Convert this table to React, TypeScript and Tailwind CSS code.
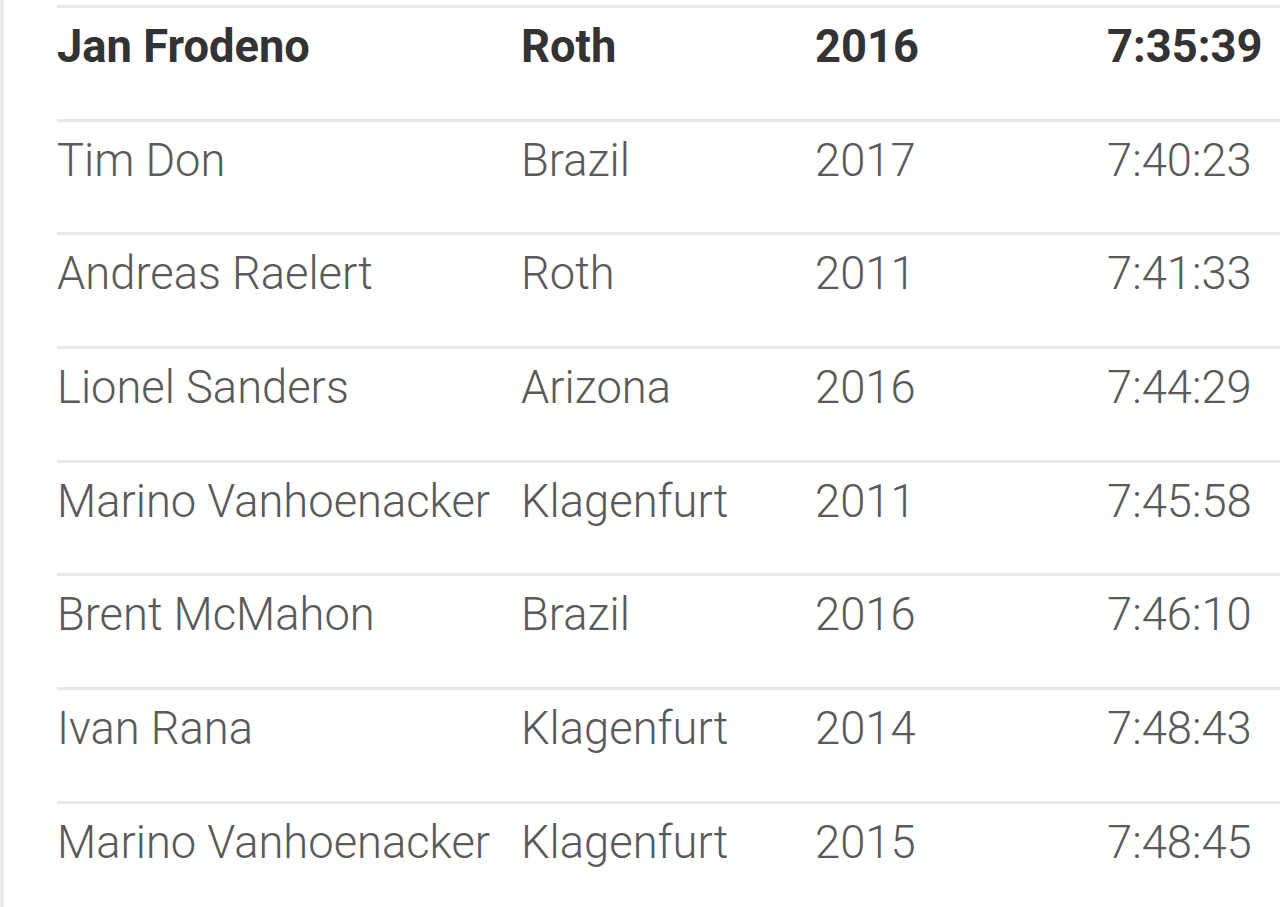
const rows = [
  { name: 'Jan Frodeno', place: 'Roth', year: '2016', time: '7:35:39', best: true },
  { name: 'Tim Don', place: 'Brazil', year: '2017', time: '7:40:23' },
  { name: 'Andreas Raelert', place: 'Roth', year: '2011', time: '7:41:33' },
  { name: 'Lionel Sanders', place: 'Arizona', year: '2016', time: '7:44:29' },
  { name: 'Marino Vanhoenacker', place: 'Klagenfurt', year: '2011', time: '7:45:58' },
  { name: 'Brent McMahon', place: 'Brazil', year: '2016', time: '7:46:10' },
  { name: 'Ivan Rana', place: 'Klagenfurt', year: '2014', time: '7:48:43' },
  { name: 'Marino Vanhoenacker', place: 'Klagenfurt', year: '2015', time: '7:48:45' },
];

// 기록 표
const App = () => {
  return (
    <div className="min-h-[907px] bg-white border-l-[4px] border-[#ebebeb] pl-[53px] pt-[5px] overflow-hidden font-['Roboto',sans-serif]">
      {rows.map((r, idx) => (
        <div
          key={idx}
          className={`grid grid-cols-[464px_294px_292px_1fr] h-[113.7px] border-t-[3px] border-[#e8e8e8] pt-[12px] text-[45.3px] leading-[54px] whitespace-nowrap ${
            r.best ? 'font-bold text-[#333333]' : 'font-light text-[#5a5a5a]'
          }`}
        >
          <p>{r.name}</p>
          <p>{r.place}</p>
          <p>{r.year}</p>
          <p>{r.time}</p>
        </div>
      ))}
    </div>
  );
};

export default App;
